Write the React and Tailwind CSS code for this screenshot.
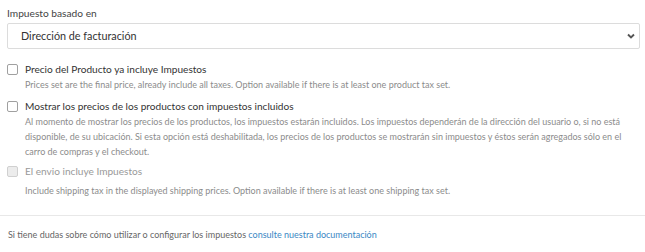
import React from "react";

function Check({ disabled }) {
  return (
    <span
      className={
        "inline-block h-[11px] w-[11px] shrink-0 rounded-[2px] border " +
        (disabled ? "border-[#d0d0d0] bg-[#ececec]" : "border-[#a0a0a0] bg-white")
      }
    />
  );
}

export default function App() {
  return (
    <div className="w-[645px] h-[252px] bg-white text-[#333] font-['Lato','Open_Sans',sans-serif]">
      <div className="pl-[7px] pt-[6px]">
        <div className="text-[10.2px] leading-[14px] text-[#444]">Impuesto basado en</div>
        <div className="mt-[3px] flex h-[26px] w-[633px] items-center justify-between rounded-[2px] border border-[#dcdcdc] pl-[13px] pr-[4px]">
          <span className="text-[10.8px] text-[#333]">Dirección de facturación</span>
          <svg width="8" height="6" viewBox="0 0 8 6" className="text-[#555]">
            <path d="M1 1.5 L4 4.5 L7 1.5" fill="none" stroke="currentColor" strokeWidth="1.9" />
          </svg>
        </div>

        <div className="mt-[13px] flex items-center gap-[7px]">
          <Check />
          <span className="text-[10.1px] leading-[14px]">Precio del Producto ya incluye Impuestos</span>
        </div>
        <div className="mt-[1px] pl-[18px] text-[9px] leading-[15px] text-[#8c8c8c]">
          Prices set are the final price, already include all taxes. Option available if there is at least one product tax set.
        </div>

        <div className="mt-[7px] flex items-center gap-[7px]">
          <Check />
          <span className="text-[10.1px] leading-[14px]">Mostrar los precios de los productos con impuestos incluidos</span>
        </div>
        <div className="mt-[1px] w-[622px] pl-[18px] text-[9px] leading-[15px] text-[#8c8c8c]">
          Al momento de mostrar los precios de los productos, los impuestos estarán incluidos. Los impuestos dependerán de la dirección del usuario o, si no está disponible, de su ubicación. Si esta opción está deshabilitada, los precios de los productos se mostrarán sin impuestos y éstos serán agregados sólo en el carro de compras y el checkout.
        </div>

        <div className="mt-[5px] flex items-center gap-[7px]">
          <Check disabled />
          <span className="text-[10.1px] leading-[14px] text-[#999]">El envio incluye Impuestos</span>
        </div>
        <div className="mt-[5px] pl-[18px] text-[9px] leading-[15px] text-[#8c8c8c]">
          Include shipping tax in the displayed shipping prices. Option available if there is at least one shipping tax set.
        </div>
      </div>
      <div className="mt-[17px] h-px w-full bg-[#e8e8e8]" />
      <div className="pl-[8px] pt-[12px] text-[9px] leading-[14px] text-[#666]">
        Si tiene dudas sobre cómo utilizar o configurar los impuestos{" "}
        <a className="text-[#3a87c4]">consulte nuestra documentación</a>
      </div>
    </div>
  );
}
